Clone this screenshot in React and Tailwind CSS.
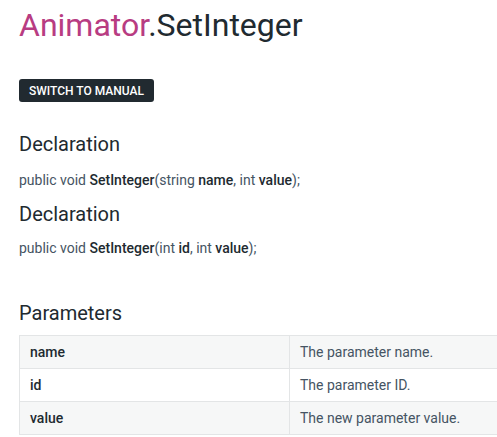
export default function App() {
  const params = [
    { name: "name", desc: "The parameter name." },
    { name: "id", desc: "The parameter ID." },
    { name: "value", desc: "The new parameter value." },
  ];

  return (
    <div className="w-[497px] h-[437px] overflow-hidden bg-white pl-[19px] pt-[3px] font-['Roboto',sans-serif] text-[#455463]">
      {/* Title */}
      <h1 className="text-[32px] leading-[44px] text-[#212a30] whitespace-nowrap">
        <span className="text-[#b83c82]">Animator</span>.SetInteger
      </h1>

      <button className="mt-[32px] h-[23px] px-[10px] rounded-[3px] bg-[#212a30] text-white text-[12px] font-medium uppercase">
        Switch to Manual
      </button>

      {/* Declarations */}
      <h2 className="mt-[30px] text-[20px] leading-[24px] text-[#212a30]">Declaration</h2>
      <p className="mt-[14px] text-[14px] leading-[20px] whitespace-nowrap">
        public void <span className="font-medium text-[#212a30]">SetInteger</span>(string{" "}
        <span className="font-medium text-[#212a30]">name</span>, int{" "}
        <span className="font-medium text-[#212a30]">value</span>);
      </p>

      <h2 className="mt-[12px] text-[20px] leading-[24px] text-[#212a30]">Declaration</h2>
      <p className="mt-[12px] text-[14px] leading-[20px] whitespace-nowrap">
        public void <span className="font-medium text-[#212a30]">SetInteger</span>(int{" "}
        <span className="font-medium text-[#212a30]">id</span>, int{" "}
        <span className="font-medium text-[#212a30]">value</span>);
      </p>

      {/* Parameters */}
      <h2 className="mt-[43px] text-[20px] leading-[24px] text-[#212a30]">Parameters</h2>
      <table className="mt-[10px] w-[520px] border-collapse text-[14px]">
        <tbody>
          {params.map((p, i) => (
            <tr key={p.name} className={i % 2 === 0 ? "bg-[#f6f7f7]" : "bg-white"}>
              <td className="w-[270px] h-[33px] border border-[#e3e5e6] px-[10px] font-medium text-[#212a30]">
                {p.name}
              </td>
              <td className="h-[33px] border border-[#e3e5e6] px-[10px]">{p.desc}</td>
            </tr>
          ))}
        </tbody>
      </table>
    </div>
  );
}
